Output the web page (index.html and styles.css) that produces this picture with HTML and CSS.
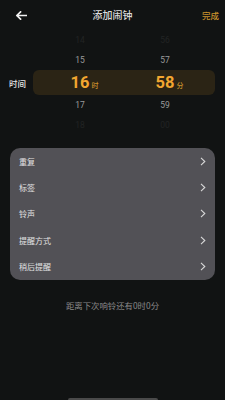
FILE: index.html
```html
<!DOCTYPE html>
<html lang="zh">
<head>
<meta charset="utf-8">
<link rel="stylesheet" href="styles.css">
</head>
<body>
<div class="screen">
  <header class="topbar">
    <svg class="back" width="12" height="9" viewBox="0 0 12 9"><path d="M11.5 4.5H1.8M5.6 0.8L1.8 4.5L5.6 8.2" fill="none" stroke="#f2f2f2" stroke-width="1.7" stroke-linecap="round" stroke-linejoin="round"/></svg>
    <div class="title">添加闹钟</div>
    <div class="done">完成</div>
  </header>

  <section class="picker">
    <div class="prow far"><span>14</span><span>56</span></div>
    <div class="prow near"><span>15</span><span>57</span></div>
    <div class="selrow">
      <div class="label">时间</div>
      <div class="band">
        <span class="num">16<i class="unit">时</i></span>
        <span class="num">58<i class="unit">分</i></span>
      </div>
    </div>
    <div class="prow near"><span>17</span><span>59</span></div>
    <div class="prow far2"><span>18</span><span>00</span></div>
  </section>

  <section class="card">
    <div class="item"><span>重复</span><svg class="chev" width="6" height="9" viewBox="0 0 6 9"><path d="M1 0.8L4.8 4.5L1 8.2" fill="none" stroke="#d8d8d8" stroke-width="1.1"/></svg></div>
    <div class="item"><span>标签</span><svg class="chev" width="6" height="9" viewBox="0 0 6 9"><path d="M1 0.8L4.8 4.5L1 8.2" fill="none" stroke="#d8d8d8" stroke-width="1.1"/></svg></div>
    <div class="item"><span>铃声</span><svg class="chev" width="6" height="9" viewBox="0 0 6 9"><path d="M1 0.8L4.8 4.5L1 8.2" fill="none" stroke="#d8d8d8" stroke-width="1.1"/></svg></div>
    <div class="item"><span>提醒方式</span><svg class="chev" width="6" height="9" viewBox="0 0 6 9"><path d="M1 0.8L4.8 4.5L1 8.2" fill="none" stroke="#d8d8d8" stroke-width="1.1"/></svg></div>
    <div class="item"><span>稍后提醒</span><svg class="chev" width="6" height="9" viewBox="0 0 6 9"><path d="M1 0.8L4.8 4.5L1 8.2" fill="none" stroke="#d8d8d8" stroke-width="1.1"/></svg></div>
  </section>

  <div class="hint">距离下次响铃还有0时0分</div>

  <div class="homebar"></div>
</div>
</body>
</html>
```

FILE: styles.css
```css
* { box-sizing: border-box; margin: 0; padding: 0; }
html, body { background: #111313; }
body {
  width: 225px;
  height: 400px;
  overflow: hidden;
  font-family: "Noto Sans CJK SC", "Noto Sans", sans-serif;
}
.screen {
  height: 400px;
  display: flex;
  flex-direction: column;
}
.topbar {
  height: 30px;
  display: flex;
  align-items: center;
  padding: 0 6px 0 15px;
  position: relative;
}
.back { display: block; }
.title {
  position: absolute;
  left: 0; right: 0;
  text-align: center;
  font-size: 10px;
  font-weight: 500;
  color: #dcdcdc;
  line-height: 30px;
  pointer-events: none;
}
.done {
  margin-left: auto;
  font-size: 8.5px;
  color: #c8912c;
  font-weight: 500;
}
.picker {
  display: flex;
  flex-direction: column;
}
.prow {
  height: 20px;
  margin-left: 33px;
  width: 182px;
  display: grid;
  grid-template-columns: 94px 76px;
  align-items: center;
  font-family: "Roboto", "Noto Sans", sans-serif;
  font-size: 8.5px;
  text-align: center;
}
.prow.far { color: #222424; }
.prow.near { color: #9a9a9a; }
.prow.far2 { color: #212323; }
.selrow {
  height: 25px;
  display: flex;
  align-items: center;
}
.label {
  width: 33px;
  padding-left: 9px;
  font-size: 8.5px;
  font-weight: 500;
  color: #e6e6e6;
}
.band {
  width: 182px;
  height: 25px;
  background: #2b2415;
  border-radius: 6px;
  display: grid;
  grid-template-columns: 94px 76px;
  align-items: center;
  text-align: center;
}
.num {
  position: relative;
  justify-self: center;
  font-family: "Roboto", "Noto Sans", sans-serif;
  font-weight: 700;
  font-size: 16.5px;
  line-height: 25px;
  color: #f2a630;
}
.unit {
  position: absolute;
  left: 100%;
  bottom: 6px;
  margin-left: 2px;
  font-style: normal;
  font-weight: 500;
  font-size: 7px;
  line-height: 8px;
  color: #c8912c;
  font-family: "Noto Sans CJK SC", sans-serif;
}
.card {
  margin: 13px 10px 0 10px;
  background: #525156;
  border-radius: 10px;
  display: flex;
  flex-direction: column;
}
.item {
  height: 26.4px;
  display: flex;
  align-items: center;
  justify-content: space-between;
  padding: 0 9px 0 9px;
  font-size: 8px;
  color: #e2e2e2;
}
.chev { display: block; }
.hint {
  margin-top: 19px;
  text-align: center;
  font-size: 8.4px;
  color: #8a8a8a;
}
.homebar {
  margin-top: auto;
  align-self: center;
  width: 90px;
  height: 2px;
  background: #4a4a4a;
  border-radius: 2px 2px 0 0;
}
```
